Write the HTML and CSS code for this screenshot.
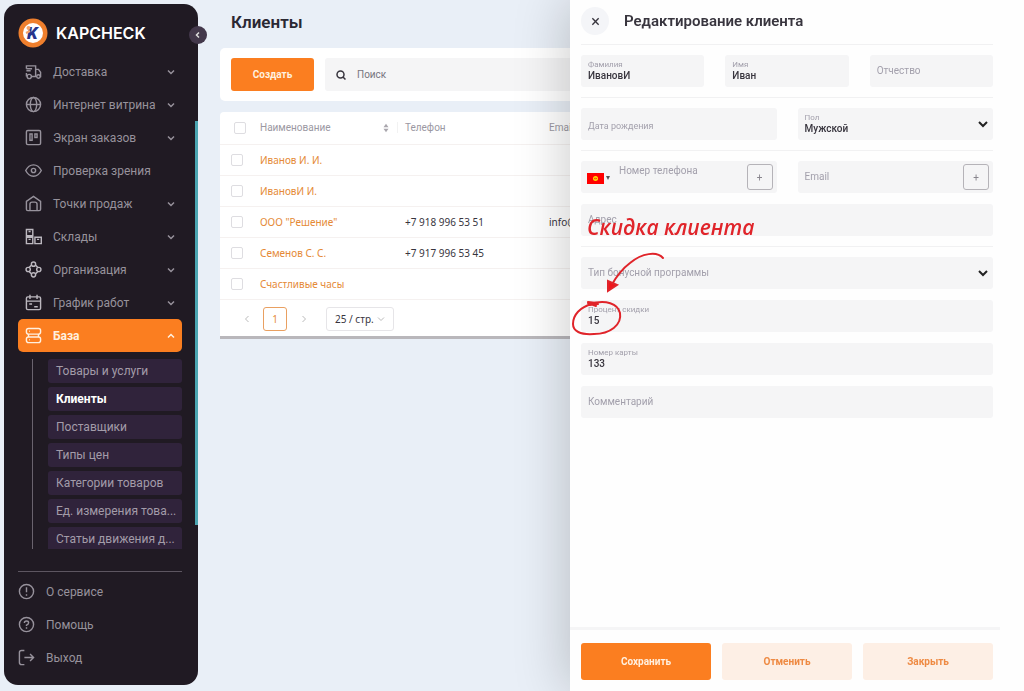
FILE: index.html
```html
<!DOCTYPE html>
<html lang="ru">
<head>
    <meta charset="UTF-8">
    <meta name="viewport" content="width=device-width, initial-scale=1.0">
    <title>Клиенты - KAPCHECK</title>
    <link rel="stylesheet" href="styles.css">
</head>
<body>
    <svg class="sprite" aria-hidden="true">
        <symbol id="chevron" viewBox="0 0 10 10"><path d="M2 3.5l3 3 3-3"/></symbol>
        <symbol id="arrow" viewBox="0 0 12 12"><path d="M2 4l4 4 4-4"/></symbol>
    </svg>

    <div class="layout">
        <aside class="sidebar">
            <div class="brand">
                <svg class="logo" viewBox="0 0 30 30" aria-hidden="true">
                    <circle cx="15" cy="15" r="14.5" fill="#ef7f2d"/>
                    <circle cx="15" cy="15" r="10" fill="#fff"/>
                    <text x="9" y="21" class="logo-letter">K</text>
                    <circle cx="10.5" cy="10" r="2" fill="#f5a36a"/>
                    <path d="M8 15l4-2" stroke="#f5a36a" stroke-width="2"/>
                </svg>
                <span class="brand-name">KAPCHECK</span>
            </div>
            <button class="collapse" aria-label="Свернуть меню">
                <svg viewBox="0 0 10 10"><path d="M6 2.5L3.5 5 6 7.500"/></svg>
            </button>

            <nav class="menu">
                <a class="menu-item" href="#">
                    <svg class="icon" viewBox="0 0 24 24"><path d="M2 8V4h13v15M2 8h8M2 11h6M2 14v4h1M9 19h7M15 9h4l3 4v6h-1"/><circle cx="6" cy="19" r="3"/><circle cx="19" cy="19" r="2.500"/></svg>
                    <span>Доставка</span>
                    <svg class="chevron"><use href="#chevron"/></svg>
                </a>
                <a class="menu-item" href="#">
                    <svg class="icon" viewBox="0 0 24 24"><circle cx="12" cy="12" r="10"/><ellipse cx="12" cy="12" rx="4.500" ry="10"/><path d="M2 12h20"/></svg>
                    <span>Интернет витрина</span>
                    <svg class="chevron"><use href="#chevron"/></svg>
                </a>
                <a class="menu-item" href="#">
                    <svg class="icon" viewBox="0 0 24 24"><rect x="2" y="2" width="20" height="20" rx="2"/><rect x="7" y="7" width="3" height="9"/><rect x="14" y="7" width="3" height="5"/></svg>
                    <span>Экран заказов</span>
                    <svg class="chevron"><use href="#chevron"/></svg>
                </a>
                <a class="menu-item" href="#">
                    <svg class="icon" viewBox="0 0 24 24"><path d="M1 12s4-8 11-8 11 8 11 8-4 8-11 8S1 12 1 12z"/><circle cx="12" cy="12" r="3"/></svg>
                    <span>Проверка зрения</span>
                </a>
                <a class="menu-item" href="#">
                    <svg class="icon" viewBox="0 0 24 24"><path d="M2 9l10-7 10 7v11a2 2 0 0 1-2 2H4a2 2 0 0 1-2-2z"/><path d="M7 22v-9q0-3 3-3h4q3 0 3 3v9"/></svg>
                    <span>Точки продаж</span>
                    <svg class="chevron"><use href="#chevron"/></svg>
                </a>
                <a class="menu-item" href="#">
                    <svg class="icon icon-light" viewBox="0 0 24 24"><path d="M2 2h9v9H2zM2 13h9v9H2zM14 13h9v9h-9zM5 5h3M5 16h3M17 16h3"/></svg>
                    <span>Склады</span>
                    <svg class="chevron"><use href="#chevron"/></svg>
                </a>
                <a class="menu-item" href="#">
                    <svg class="icon icon-light" viewBox="0 0 24 24"><circle cx="12" cy="4.500" r="3"/><circle cx="4.500" cy="12" r="3"/><circle cx="19.500" cy="12" r="3"/><circle cx="12" cy="19.500" r="3"/><path d="M9 6L6 9M15 6l3 3M9 18l-3-3M15 18l3-3"/></svg>
                    <span>Организация</span>
                    <svg class="chevron"><use href="#chevron"/></svg>
                </a>
                <a class="menu-item" href="#">
                    <svg class="icon icon-light" viewBox="0 0 24 24"><rect x="2" y="4" width="20" height="18" rx="2"/><path d="M7 1v6M17 1v6M2 10h20M6 14h4M13 18h5"/></svg>
                    <span>График работ</span>
                    <svg class="chevron"><use href="#chevron"/></svg>
                </a>
                <a class="menu-item active" href="#">
                    <svg class="icon" viewBox="0 0 24 24"><rect x="2" y="2" width="20" height="8" rx="3"/><rect x="2" y="14" width="20" height="8" rx="3"/><path d="M6 6h1M6 18h1M5 10v4M19 10v4"/></svg>
                    <span>База</span>
                    <svg class="chevron up"><use href="#chevron"/></svg>
                </a>
                <div class="submenu">
                    <a href="#">Товары и услуги</a>
                    <a href="#" class="current">Клиенты</a>
                    <a href="#">Поставщики</a>
                    <a href="#">Типы цен</a>
                    <a href="#">Категории товаров</a>
                    <a href="#">Ед. измерения това...</a>
                    <a href="#">Статьи движения д...</a>
                </div>
            </nav>

            <div class="bottom-menu">
                <a href="#">
                    <svg class="icon" viewBox="0 0 24 24"><circle cx="12" cy="12" r="10"/><path d="M12 6v7M12 16v2"/></svg>
                    <span>О сервисе</span>
                </a>
                <a href="#">
                    <svg class="icon" viewBox="0 0 24 24"><circle cx="12" cy="12" r="10"/><path d="M9 10q0-3 3-3t3 2.500q0 2-3 3.500v1M12 16v2"/></svg>
                    <span>Помощь</span>
                </a>
                <a href="#">
                    <svg class="icon" viewBox="0 0 24 24"><path d="M9 2H5a3 3 0 0 0-3 3v14a3 3 0 0 0 3 3h4M9 12h13M17 7l5 5-5 5"/></svg>
                    <span>Выход</span>
                </a>
            </div>
            <div class="scroll-thumb"></div>
        </aside>

        <main class="content">
            <h1>Клиенты</h1>
            <div class="toolbar">
                <button class="btn btn-primary create">Создать</button>
                <label class="search">
                    <svg viewBox="0 0 12 12" aria-hidden="true"><circle cx="5.500" cy="5.500" r="3.500"/><path d="M8 8l2.500 2.500"/></svg>
                    <input type="search" placeholder="Поиск" aria-label="Поиск">
                </label>
            </div>

            <div class="table-card">
                <table>
                    <colgroup>
                        <col class="col-check">
                        <col class="col-name">
                        <col class="col-phone">
                        <col>
                    </colgroup>
                    <thead>
                        <tr>
                            <th><input type="checkbox" aria-label="Выбрать все"></th>
                            <th class="name-head">
                                <div class="sortable">Наименование
                                    <svg viewBox="0 0 8 12" aria-hidden="true"><path d="M1 5l3-4 3 4zM1 7l3 4 3-4z"/></svg>
                                </div>
                            </th>
                            <th>Телефон</th>
                            <th>Email</th>
                        </tr>
                    </thead>
                    <tbody>
                        <tr>
                            <td><input type="checkbox" aria-label="Иванов И. И."></td>
                            <td><a href="#">Иванов И. И.</a></td>
                            <td></td>
                            <td></td>
                        </tr>
                        <tr>
                            <td><input type="checkbox" aria-label="ИвановИ И."></td>
                            <td><a href="#">ИвановИ И.</a></td>
                            <td></td>
                            <td></td>
                        </tr>
                        <tr>
                            <td><input type="checkbox" aria-label="ООО Решение"></td>
                            <td><a href="#">ООО "Решение"</a></td>
                            <td>+7 918 996 53 51</td>
                            <td>info@</td>
                        </tr>
                        <tr>
                            <td><input type="checkbox" aria-label="Семенов С. С."></td>
                            <td><a href="#">Семенов С. С.</a></td>
                            <td>+7 917 996 53 45</td>
                            <td></td>
                        </tr>
                        <tr>
                            <td><input type="checkbox" aria-label="Счастливые часы"></td>
                            <td><a href="#">Счастливые часы</a></td>
                            <td></td>
                            <td></td>
                        </tr>
                    </tbody>
                </table>
                <div class="pagination">
                    <button class="page-nav" aria-label="Назад"><svg class="left"><use href="#chevron"/></svg></button>
                    <button class="page">1</button>
                    <button class="page-nav" aria-label="Вперёд"><svg class="right"><use href="#chevron"/></svg></button>
                    <div class="page-size">
                        <select aria-label="Строк на странице"><option>25 / стр.</option></select>
                        <svg><use href="#chevron"/></svg>
                    </div>
                </div>
            </div>
        </main>
    </div>

    <section class="drawer">
        <header class="drawer-header">
            <button class="close" aria-label="Закрыть окно">
                <svg viewBox="0 0 10 10"><path d="M1.500 1.500l7 7M8.500 1.500l-7 7"/></svg>
            </button>
            <h2>Редактирование клиента</h2>
        </header>

        <form class="form">
            <div class="row">
                <div class="field filled"><label for="surname">Фамилия</label><input id="surname" value="ИвановИ"></div>
                <div class="field filled"><label for="name">Имя</label><input id="name" value="Иван"></div>
                <div class="field"><label for="patronymic">Отчество</label><input id="patronymic"></div>
            </div>
            <hr>
            <div class="row">
                <div class="field small-label"><label for="birth">Дата рождения</label><input id="birth"></div>
                <div class="field filled">
                    <label for="sex">Пол</label>
                    <select id="sex"><option>Мужской</option></select>
                    <svg class="select-arrow"><use href="#arrow"/></svg>
                </div>
            </div>
            <hr>
            <div class="row">
                <div class="field phone">
                    <button type="button" class="country" aria-label="Страна">
                        <svg class="flag" viewBox="0 0 17 11"><path fill="#f00" d="M0 0h17v11H0z"/><circle cx="8.500" cy="5.500" r="2.500" fill="#fd0"/><path d="M7 5q2 2 3 0M7 6q2-2 3 0" fill="none" stroke="#f00" stroke-width=".5"/></svg>
                        <svg class="caret" viewBox="0 0 4 4"><path d="M0 0h4L2 4z"/></svg>
                    </button>
                    <label for="phone">Номер телефона</label><input id="phone" type="tel">
                    <button type="button" class="add" aria-label="Добавить телефон">+</button>
                </div>
                <div class="field">
                    <label for="email">Email</label><input id="email" type="email">
                    <button type="button" class="add" aria-label="Добавить email">+</button>
                </div>
            </div>
            <div class="field"><label for="address">Адрес</label><input id="address"></div>
            <hr>
            <div class="field">
                <label for="bonus">Тип бонусной программы</label>
                <select id="bonus"><option></option></select>
                <svg class="select-arrow"><use href="#arrow"/></svg>
            </div>
            <div class="field filled"><label for="discount">Процент скидки</label><input id="discount" value="15"></div>
            <div class="field filled"><label for="card">Номер карты</label><input id="card" value="133"></div>
            <div class="field"><label for="comment">Комментарий</label><input id="comment"></div>
        </form>

        <footer class="drawer-footer">
            <button class="btn btn-primary">Сохранить</button>
            <button class="btn btn-light">Отменить</button>
            <button class="btn btn-light">Закрыть</button>
        </footer>

        <!-- hint over the discount field -->
        <div class="hint">
            <span>Скидка клиента</span>
            <svg viewBox="0 0 100 90" aria-hidden="true">
                <path d="M93 11C87 4 72 6 60 16C52 22 46 30 41 39"/>
                <path class="head" d="M38 34v10l9-6z"/>
                <path d="M20 57C36 52 48 57 50 66C52 78 40 87 24 87C10 88 3 84 3 77C3 68 10 60 22 57"/>
                <path d="M18 55l9 1M19 58l9-1M18 56l8 3"/>
            </svg>
        </div>
    </section>
</body>
</html>
```
FILE: styles.css
```css
:root {
    --orange: #fb7e20;
    --dark: #201a23;
    --dark-item: #30233b;
    --muted: #97929c;
    --field: #f5f5f6;
    --label: #a3a0ac;
    --text: #38353e;
}

* {
    box-sizing: border-box;
}

body {
    margin: 0;
    font-family: Roboto, "Noto Sans", sans-serif;
    font-size: 12px;
    color: var(--text);
    background: #e9eff7;
    overflow: hidden;
}

a {
    color: inherit;
    text-decoration: none;
}

button, input, select {
    font: inherit;
    color: inherit;
    border: none;
    background: none;
    padding: 0;
    margin: 0;
    outline: none;
}

button {
    cursor: pointer;
}

svg {
    fill: none;
    stroke: currentColor;
    flex-shrink: 0;
}

.sprite {
    display: none;
}

.layout {
    display: flex;
    gap: 22px;
    height: 100vh;
    padding: 4px 0 6px 4px;
}

/* Sidebar */
.sidebar {
    position: relative;
    display: flex;
    flex-direction: column;
    width: 194px;
    flex-shrink: 0;
    padding: 6px 16px 11px 14px;
    background: var(--dark);
    border-radius: 14px;
    color: var(--muted);
}

.brand {
    display: flex;
    align-items: center;
    gap: 8px;
    height: 45px;
    flex-shrink: 0;
}

.logo {
    width: 30px;
    height: 30px;
    stroke: none;
}

.logo-letter {
    font: italic 900 17px Roboto, sans-serif;
    fill: #27348b;
}

.brand-name {
    font-family: Inter, sans-serif;
    font-size: 16px;
    font-weight: 600;
    color: #fff;
}

.collapse {
    position: absolute;
    top: 22px;
    right: -9px;
    display: flex;
    align-items: center;
    justify-content: center;
    width: 18px;
    height: 18px;
    border-radius: 50%;
    background: #43384b;
    color: #ddd;
}

.collapse svg {
    width: 10px;
    height: 10px;
    stroke-width: 1.5;
}

.scroll-thumb {
    position: absolute;
    top: 117px;
    right: 0;
    width: 3px;
    height: 404px;
    background: #4ba5b1;
}

.menu {
    flex: 1;
    min-height: 0;
    overflow: hidden;
}

.menu-item {
    display: flex;
    align-items: center;
    gap: 11px;
    height: 33px;
    padding: 0 6px 0 7px;
    border-radius: 5px;
    white-space: nowrap;
}

.menu-item span {
    flex: 1;
    min-width: 0;
}

.icon {
    width: 17px;
    height: 17px;
    stroke-width: 2;
}

.icon-light {
    color: #bcb8bf;
}

.chevron {
    width: 10px;
    height: 10px;
    stroke-width: 1.5;
}

.up {
    transform: rotate(180deg);
}

.active {
    background: var(--orange);
    color: #fff0df;
    font-weight: 700;
}

.submenu {
    display: flex;
    flex-direction: column;
    gap: 4px;
    margin: 7px 0 0 14px;
    padding-left: 15px;
    border-left: 1px solid #6a636e;
}

.submenu a {
    height: 24px;
    line-height: 24px;
    padding: 0 4px 0 8px;
    background: var(--dark-item);
    border-radius: 3px;
    color: #a39ca9;
    white-space: nowrap;
}

.submenu .current {
    color: #fff;
    font-weight: 700;
}

.bottom-menu {
    margin-top: 22px;
    padding-top: 3px;
    border-top: 1px solid #5d5661;
}

.bottom-menu a {
    display: flex;
    align-items: center;
    gap: 11px;
    height: 33px;
}

/* Clients list */
.content {
    flex: 1;
    min-width: 0;
}

h1 {
    margin: 0 0 0 11px;
    font-size: 17px;
    line-height: 36px;
    font-weight: 600;
    height: 44px;
    color: #2a2833;
}

.toolbar {
    display: flex;
    gap: 11px;
    padding: 10px 11px;
    margin-bottom: 11px;
    background: #fff;
    border-radius: 5px;
}

.btn {
    height: 37px;
    border-radius: 3px;
    font-size: 10px;
    font-weight: 700;
}

.btn-primary {
    background: var(--orange);
    color: #fff0df;
}

.btn-light {
    background: #fdefe5;
    color: #ee8a43;
}

.create {
    width: 83px;
    height: 33px;
}

.search {
    display: flex;
    flex: 1;
    align-items: center;
    gap: 10px;
    padding: 0 10px;
    background: var(--field);
    border-radius: 3px;
}

.search svg {
    width: 12px;
    height: 12px;
    stroke-width: 1.5;
}

.search input {
    flex: 1;
    font-size: 10px;
}

.search input::placeholder {
    color: #77747d;
}

.table-card {
    background: #fff;
    border-radius: 4px 4px 0 0;
    border-bottom: 3px solid #b9b7bb;
}

table {
    width: 100%;
    table-layout: fixed;
    border-collapse: collapse;
    font-family: "Noto Sans", sans-serif;
    font-size: 10px;
}

.col-check {
    width: 33px;
}

.col-name {
    width: 145px;
}

.col-phone {
    width: 144px;
}

th, td {
    height: 31px;
    padding: 0 7px;
    text-align: left;
    border-bottom: 1px solid #f5f1f0;
    white-space: nowrap;
}

th {
    height: 32px;
    color: #9b98a2;
    font-weight: 400;
    font-family: Roboto, sans-serif;
}

th:first-child {
    padding-left: 14px;
}

th:first-child, td:first-child {
    padding-right: 0;
}

td:first-child {
    padding-left: 11px;
}

.name-head {
    padding-right: 0;
}

td a {
    color: #e58a37;
}

.sortable {
    display: flex;
    align-items: center;
    justify-content: space-between;
    padding-right: 7px;
    border-right: 1px solid #f2f2f2;
}

.sortable svg {
    width: 8px;
    height: 10px;
    stroke: none;
    fill: #aaa7ae;
}

input[type="checkbox"] {
    appearance: none;
    display: block;
    width: 12px;
    height: 12px;
    background: #fff;
    border: 1px solid #dedde1;
    border-radius: 2px;
}

.pagination {
    display: flex;
    align-items: center;
    gap: 8px;
    height: 36px;
    padding: 3px 18px 0;
    font-family: "Noto Sans", sans-serif;
    font-size: 10px;
}

.page {
    width: 24px;
    height: 24px;
    border: 1px solid #e9a061;
    border-radius: 3px;
    color: #e58a37;
}

.page-nav {
    display: flex;
    justify-content: center;
    width: 17px;
    color: #bbb;
}

.page-nav svg, .page-size svg {
    width: 10px;
    height: 10px;
}

.left {
    transform: rotate(90deg);
}

.right {
    transform: rotate(-90deg);
}

.page-size {
    display: flex;
    align-items: center;
    width: 68px;
    height: 24px;
    margin-left: 6px;
    padding: 0 7px 0 8px;
    border: 1px solid #e6e5e8;
    border-radius: 3px;
}

.page-size select {
    flex: 1;
    min-width: 0;
    appearance: none;
}

.page-size svg {
    color: #bbb;
}

/* Edit drawer */
.drawer {
    position: fixed;
    top: 0;
    right: 0;
    bottom: 0;
    width: 454px;
    display: flex;
    flex-direction: column;
    background: #fefefe;
    box-shadow: -4px 0 50px rgba(0, 0, 0, 0.2);
}

.drawer-header {
    display: flex;
    align-items: center;
    gap: 15px;
    margin: 0 31px 0 11px;
    height: 45px;
    padding-bottom: 2px;
    border-bottom: 1px solid #f1f1f2;
}

.close {
    display: flex;
    align-items: center;
    justify-content: center;
    width: 28px;
    height: 28px;
    border-radius: 50%;
    background: #f4f5f8;
}

.close svg {
    width: 9px;
    height: 9px;
    stroke-width: 1.5;
}

h2 {
    margin: 0;
    font-size: 15px;
    font-weight: 600;
}

.form {
    flex: 1;
    display: flex;
    flex-direction: column;
    gap: 11px;
    padding: 10px 31px 0 11px;
}

.form hr {
    width: 100%;
    height: 1px;
    margin: -1px 0;
    border: none;
    background: #f1f1f2;
}

.row {
    display: flex;
    gap: 21px;
}

.field {
    position: relative;
    flex: 1 1 0;
    min-width: 0;
    display: flex;
    align-items: center;
    background: var(--field);
    border-radius: 3px;
}

.form > .field {
    flex: none;
}

.field input, .field select {
    flex: 1;
    min-width: 0;
    width: 100%;
    height: 32px;
    padding: 9px 7px 0;
    font-size: 10px;
    font-weight: 500;
    appearance: none;
}

.field label {
    position: absolute;
    left: 7px;
    top: 0;
    font-size: 10px;
    line-height: 32px;
    color: var(--label);
    pointer-events: none;
}

.filled label {
    top: 4px;
    font-size: 8px;
    line-height: 11px;
}

.small-label label {
    font-size: 9px;
    line-height: 36px;
}

.select-arrow {
    position: absolute;
    right: 4px;
    width: 12px;
    height: 12px;
    stroke-width: 2;
    color: #222;
    pointer-events: none;
}

.country {
    display: flex;
    align-items: center;
    gap: 2px;
    padding-left: 6px;
    padding-top: 2px;
}

.flag {
    width: 17px;
    height: 11px;
    stroke: none;
}

.caret {
    width: 4px;
    height: 4px;
    fill: #555;
    stroke: none;
}

.phone label {
    left: 38px;
    line-height: 20px;
}

.add {
    width: 26px;
    height: 26px;
    margin-right: 4px;
    flex-shrink: 0;
    border: 1px solid #b5b3b8;
    border-radius: 3px;
    font-size: 10px;
    color: #88858d;
}

.drawer-footer {
    display: flex;
    gap: 11px;
    margin-right: 24px;
    padding: 13px 7px 11px 11px;
    border-top: 3px solid var(--field);
}

.drawer-footer .btn {
    flex: 1;
}

.hint {
    position: absolute;
    top: 211px;
    left: 0;
    color: #e0242a;
    pointer-events: none;
}

.hint span {
    display: block;
    margin-left: 17px;
    font-family: "Open Sans", sans-serif;
    font-size: 21px;
    font-style: italic;
    font-weight: 600;
    line-height: 32px;
}

.hint svg {
    display: block;
    width: 100px;
    height: 90px;
    margin-top: 4px;
    stroke-width: 2;
    stroke-linecap: round;
}

.hint .head {
    fill: #f0141a;
}
```
